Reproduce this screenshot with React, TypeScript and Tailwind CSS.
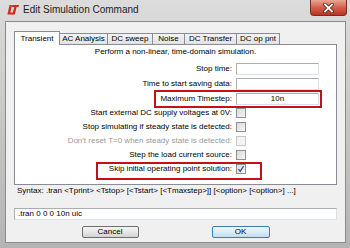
import type { ReactNode } from "react";

const tabs = [
  { label: "Transient", w: "w-[46px]", active: true },
  { label: "AC Analysis", w: "w-[49px]" },
  { label: "DC sweep", w: "w-[46px]" },
  { label: "Noise", w: "w-[33px]" },
  { label: "DC Transfer", w: "w-[53px]" },
  { label: "DC op pnt", w: "w-[44px]" },
];

const Logo = () => (
  <svg width="12" height="10" viewBox="0 0 12 10">
    <polygon points="2.6,0 5,0 3.3,7.4 6.8,7.4 6.3,9.6 0.4,9.6" fill="#d32a1e" />
    <polygon points="5.4,0 12,0 11.5,2.1 9.6,2.1 7.8,9.6 5.4,9.6 7.2,2.1 4.9,2.1" fill="#d32a1e" />
  </svg>
);

const TextBox = ({ value, center }: { value?: string; center?: boolean }) => (
  <div
    className={`w-[83px] h-[12px] bg-white border border-[#abadb3] border-b-[#dbdfe6] border-r-[#dbdfe6] rounded-[1px] leading-[10px] ${
      center ? "text-center" : "pl-[3px]"
    }`}
  >
    {value}
  </div>
);

const Check = ({ checked, disabled }: { checked?: boolean; disabled?: boolean }) => (
  <div
    className={`w-[10px] h-[10px] border flex items-center justify-center ${
      disabled
        ? "border-[#c7c7c7] bg-[#f4f4f4]"
        : "border-[#8e8f8f] bg-gradient-to-br from-[#d9d9d9] to-[#f7f7f7]"
    }`}
  >
    {checked && (
      <svg width="8" height="8" viewBox="0 0 8 8">
        <path d="M1.5 4.2 L3.2 6.3 L6.6 1.2" fill="none" stroke="#3b4f8f" strokeWidth="1.3" />
      </svg>
    )}
  </div>
);

const Row = ({
  label,
  children,
  cls,
  disabled,
}: {
  label: string;
  children: ReactNode;
  cls: string;
  disabled?: boolean;
}) => (
  <div className={`flex items-center justify-end gap-[4px] ${cls}`}>
    <span className={disabled ? "text-[#9a9a9a]" : ""}>{label}</span>
    {children}
  </div>
);

export default function App() {
  return (
    <div className="w-[350px] h-[248px] overflow-hidden flex flex-col bg-gradient-to-b from-[#dcdcdc] via-[#c6c6c6] to-[#b4b4b4] font-['Liberation_Sans',Arial,sans-serif] text-[8px] leading-[10px] text-black">
      {/* Title bar */}
      <div className="h-[21px] shrink-0 flex items-start">
        <div className="pl-[7px] pt-[5px]">
          <Logo />
        </div>
        <span className="ml-[4px] mt-[4px] text-[10px] leading-[12px] text-[#1b1b1b]">
          Edit Simulation Command
        </span>
        <div className="ml-auto mr-[3px] w-[37px] h-[16px] rounded-b-[4px] border border-t-0 border-[#7a2c22] bg-gradient-to-b from-[#e9a594] via-[#d2604c] to-[#b9331f] flex items-center justify-center">
          <svg width="11" height="10" viewBox="0 0 11 10">
            <path d="M2 1.5 L9 8.5 M9 1.5 L2 8.5" stroke="#5a1d14" strokeWidth="3.4" strokeLinecap="square" />
            <path d="M2 1.5 L9 8.5 M9 1.5 L2 8.5" stroke="#ffffff" strokeWidth="1.8" strokeLinecap="square" />
          </svg>
        </div>
      </div>

      {/* Client area */}
      <div className="ml-[5px] mr-[4px] mb-[5px] flex-1 flex flex-col bg-[#f0f0f0] border border-[#8a8a8a] px-[8px] pt-[9px]">
        {/* Tabs */}
        <div className="h-[13px] flex items-end">
          {tabs.map((t, i) => (
            <div
              key={t.label}
              className={`${t.w} ${i > 0 ? "-ml-px" : ""} flex items-center justify-center border border-b-0 border-[#898c95] ${
                t.active
                  ? "h-[14px] -mb-px relative z-10 bg-white"
                  : "h-[11px] bg-gradient-to-b from-[#f4f4f4] to-[#e2e2e2]"
              }`}
            >
              {t.label}
            </div>
          ))}
        </div>

        {/* Panel */}
        <div className="bg-white border border-[#898c95] pt-[2px] pb-[8px] flex flex-col">
          <div className="text-center">Perform a non-linear, time-domain simulation.</div>
          <div className="mt-[4px] flex flex-col">
            <Row label="Stop time:" cls="h-[15px] mr-[17px]">
              <TextBox />
            </Row>
            <Row label="Time to start saving data:" cls="h-[15px] mr-[17px]">
              <TextBox />
            </Row>
            <div className="h-[15px] flex items-center justify-end mr-[14px]">
              <div className="h-[18px] flex items-center gap-[4px] border-2 border-[#c1121c] pl-[4px] pr-[1px]">
                <span>Maximum Timestep:</span>
                <TextBox value="10n" center />
              </div>
            </div>
            <Row label="Start external DC supply voltages at 0V:" cls="h-[14px] mr-[90px]">
              <Check />
            </Row>
            <Row label="Stop simulating if steady state is detected:" cls="h-[14px] mr-[90px]">
              <Check />
            </Row>
            <Row label="Don't reset T=0 when steady state is detected:" cls="h-[14px] mr-[90px]" disabled>
              <Check disabled />
            </Row>
            <Row label="Step the load current source:" cls="h-[14px] mr-[90px]">
              <Check />
            </Row>
            <div className="h-[14px] flex items-start justify-end mr-[74px]">
              <div className="h-[18px] flex items-start gap-[4px] border-2 border-[#c1121c] pl-[11px] pr-[14px]">
                <span>Skip initial operating point solution:</span>
                <Check checked />
              </div>
            </div>
          </div>
        </div>

        <div className="mt-[1px] pl-[3px]">
          Syntax: .tran &lt;Tprint&gt; &lt;Tstop&gt; [&lt;Tstart&gt; [&lt;Tmaxstep&gt;]] [&lt;option&gt; [&lt;option&gt;] ...]
        </div>

        <div className="mt-[12px] h-[12px] bg-white border border-[#abadb3] border-b-[#dbdfe6] border-r-[#dbdfe6] pl-[3px] leading-[10px]">
          .tran 0 0 0 10n uic
        </div>

        <div className="mt-[6px] flex justify-center gap-[73px]">
          <div className="w-[57px] h-[12px] rounded-[2px] border border-[#707070] bg-gradient-to-b from-[#f3f3f3] via-[#e6e6e6] to-[#d2d2d2] flex items-center justify-center">
            Cancel
          </div>
          <div className="w-[58px] h-[12px] rounded-[2px] border border-[#3c7fb1] bg-gradient-to-b from-[#eef6fb] via-[#dcecf8] to-[#c2ddf1] flex items-center justify-center">
            OK
          </div>
        </div>
      </div>
    </div>
  );
}
